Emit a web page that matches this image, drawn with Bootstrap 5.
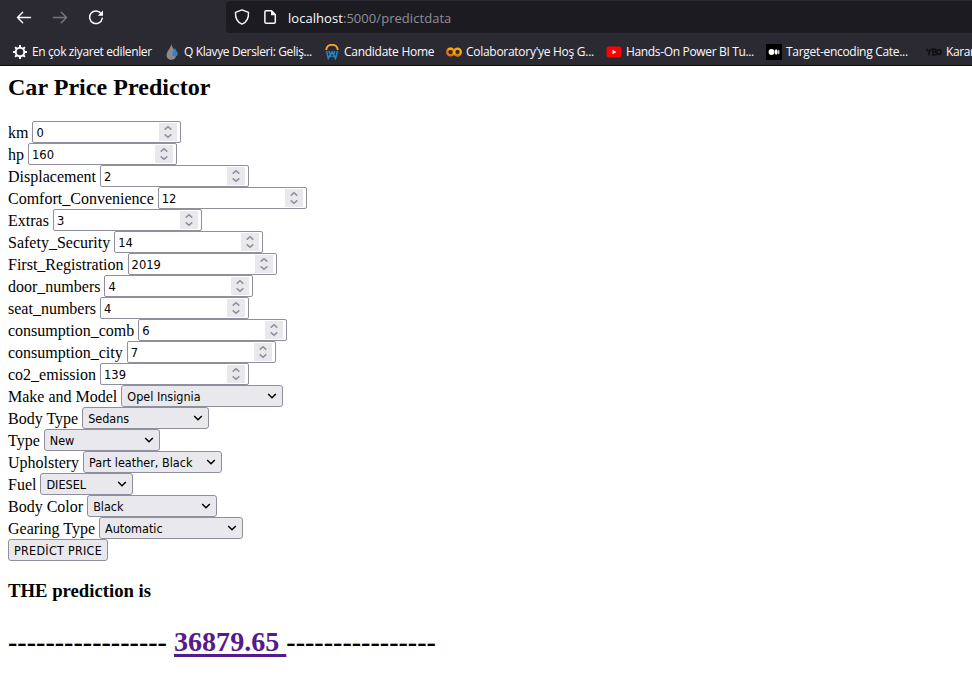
<!DOCTYPE html>
<html lang="tr">
<head>
<meta charset="utf-8">
<title>Car Price Predictor</title>
<link href="https://cdn.jsdelivr.net/npm/bootstrap@5.3.0/dist/css/bootstrap.min.css" rel="stylesheet">
<style>
body{font-family:"Liberation Serif",serif;font-size:16px;color:#000;line-height:22px;overflow:hidden}
.chrome{height:66px;background:#2b2a33;border-bottom:1px solid #0c0c0d;color:#fbfbfe;font-family:"Open Sans","Noto Sans",sans-serif;overflow:hidden}
.chrome svg{display:block;flex:none}
.topbar{height:34px;padding-left:16px}
.tools{gap:20px}
.address{height:32px;margin-left:122px;padding-left:8px;background:#1c1b22;border-radius:4px 0 0 4px;font-size:13px;letter-spacing:.05px}
.address svg+svg{margin-left:12px}
.address span.url{margin-left:10px;padding-top:1px}
.address .dim{color:#8f8f97}
.bookmarks{height:34px;padding-left:12px;padding-top:1px;font-size:12px;line-height:16px;letter-spacing:-.38px}
.bm{width:160px;gap:4px;flex:none;white-space:nowrap}
.bm span{padding-top:1px}
.bm-first{width:152px}.bm-short{width:122px;letter-spacing:-.27px}.bm-colab{letter-spacing:-.28px}.bm-video{letter-spacing:-.34px}.bm-target{letter-spacing:-.3px}
.page-body{padding:8px}
h1.title{font-size:24px;font-weight:700;line-height:27px;margin:0 0 20px;letter-spacing:.04px}
.field{height:22px;gap:4px;white-space:nowrap}
.field label{padding-top:1px}
.field input,.field select,.predict{font-family:"DejaVu Sans Condensed","DejaVu Sans",sans-serif;font-stretch:condensed;font-size:12.5px;height:22px;color:#000;border:1px solid #8f8f9d;margin:0;outline:0;letter-spacing:0}
.field input{width:149px;border-radius:2px;font-size:12.8px;padding:2px 3px 0;background:#fff url("data:image/svg+xml,%3Csvg xmlns='http://www.w3.org/2000/svg' width='18' height='18'%3E%3Cpath fill='%23e9e9ed' d='M0 0h18v18H0z'/%3E%3Cpath d='M5.7 6.6 9 3.7l3.3 2.9M5.7 11.4 9 14.3l3.3-2.9' fill='none' stroke='%238f8f9d' stroke-width='1.6'/%3E%3C/svg%3E") no-repeat right 3px center;appearance:textfield;-moz-appearance:textfield}
.field input::-webkit-inner-spin-button{appearance:none;-webkit-appearance:none;margin:0}
.field select{border-radius:3px;padding:0 20px 0 5px;appearance:none;background:#e9e9ed url("data:image/svg+xml,%3Csvg xmlns='http://www.w3.org/2000/svg' width='10' height='8'%3E%3Cpath d='M1.2 2 5 5.8 8.8 2' fill='none' stroke='%23000' stroke-width='1.5'/%3E%3C/svg%3E") no-repeat right 5px center}
.predict{display:block;width:100px;padding:1px 0 0;background:#e9e9ed;border-radius:3px;white-space:nowrap;font-size:12.4px;letter-spacing:.3px;line-height:20px}
.w-model{width:162px}.w-body{width:127px}.w-type{width:116px}.w-uph{width:139px}.w-fuel{width:93px}.w-color{width:130px}.w-gear{width:144px}
.result{font-size:18.72px;font-weight:700;line-height:22px;margin:19px 0 0}
.price{font-size:28.08px;font-weight:700;line-height:32px;margin:24px 0 0;white-space:pre}
.price a{color:#551a8b;text-decoration:underline;text-decoration-thickness:3px;text-underline-offset:3px;text-decoration-skip-ink:none}
</style>
</head>
<body>
<header class="chrome">
  <div class="topbar d-flex align-items-center">
    <div class="tools d-flex align-items-center">
      <svg width="16" height="16" viewBox="0 0 16 16" fill="none" stroke="#fbfbfe" stroke-width="1.4" stroke-linecap="round" stroke-linejoin="round"><path d="M14.5 8.5H1.5M6.7 3.2 1.5 8.5l5.2 5.3"/></svg>
      <svg width="16" height="16" viewBox="0 0 16 16" fill="none" stroke="#77767e" stroke-width="1.4" stroke-linecap="round" stroke-linejoin="round"><path d="M1.5 8.5h13M9.3 3.2l5.2 5.3-5.2 5.3"/></svg>
      <svg width="16" height="16" viewBox="0 0 16 16"><path d="M13.3 4.9A6.3 6.3 0 1 0 14.2 9.3" fill="none" stroke="#fbfbfe" stroke-width="1.5" stroke-linecap="round"/><path d="M15 1.6v5.2H9.8z" fill="#fbfbfe"/></svg>
    </div>
    <div class="address d-flex align-items-center flex-grow-1">
      <svg width="16" height="16" viewBox="0 0 16 16" fill="none" stroke="#fbfbfe" stroke-width="1.4" stroke-linejoin="round"><path d="M8 .9 14.5 3.3C14.8 9 12.5 13.4 8 15.2 3.5 13.4 1.2 9 1.5 3.3z"/></svg>
      <svg width="16" height="16" viewBox="0 0 16 16"><path d="M4.2 1.7H9.5L13.3 5.5V13a1.3 1.3 0 0 1-1.3 1.3H4.2A1.3 1.3 0 0 1 2.9 13V3a1.3 1.3 0 0 1 1.3-1.3z" fill="none" stroke="#fbfbfe" stroke-width="1.5"/><path d="M9 1.5v4.7h4.7z" fill="#fbfbfe"/></svg>
      <span class="url">localhost<span class="dim">:5000/predictdata</span></span>
    </div>
  </div>
  <nav class="bookmarks d-flex align-items-center">
    <div class="bm bm-first d-flex align-items-center">
      <svg width="16" height="16" viewBox="0 0 16 16" fill="none" stroke="#fbfbfe"><circle cx="8" cy="8" r="4.3" stroke-width="2"/><path stroke-width="2" d="M8 1v2.5M8 12.5V15M1 8h2.5M12.5 8H15M3.1 3.1l1.6 1.6M11.3 11.3l1.6 1.6M3.1 12.9l1.6-1.6M11.3 4.7l1.6-1.6"/></svg>
      <span>En çok ziyaret edilenler</span>
    </div>
    <div class="bm d-flex align-items-center">
      <svg width="16" height="16" viewBox="0 0 16 16"><path d="M7.3 0C7 4 2.6 7 2.6 11.2c0 6 9.4 6 9.4 0C12 7 8 4 7.3 0z" fill="#8b8b8a"/><path d="M10.8 3.5c-.2 2.5-2.6 4-2.6 6.2 0 3.7 5.6 3.7 5.6 0 0-2.2-2.7-3.7-3-6.2z" fill="#3c7fc0"/></svg>
      <span>Q Klavye Dersleri: Geliş...</span>
    </div>
    <div class="bm bm-short d-flex align-items-center">
      <svg width="16" height="16" viewBox="0 0 16 16" fill="none"><path d="M2.2 6C2.6-.9 13.4-.9 13.8 6" stroke="#f6a32c" stroke-width="2"/><path d="M2.5 7l1.8 7.4L8 8l3.5 6.4L13.5 7M5 7l2.2 6M10.7 7 9 13" stroke="#2383bd" stroke-width="1.6"/></svg>
      <span>Candidate Home</span>
    </div>
    <div class="bm bm-colab d-flex align-items-center">
      <svg width="16" height="16" viewBox="0 0 16 16" fill="none" stroke-width="2.3"><circle cx="4.5" cy="8" r="3.3" stroke="#e8710a"/><circle cx="11.5" cy="8" r="3.3" stroke="#f9ab00"/><path d="M2.1 5.7a3.3 3.3 0 0 1 4.7 0" stroke="#f9ab00"/><path d="M9.2 10.3a3.3 3.3 0 0 0 4.7 0" stroke="#e8710a"/></svg>
      <span>Colaboratory'ye Hoş G...</span>
    </div>
    <div class="bm bm-video d-flex align-items-center">
      <svg width="16" height="16" viewBox="0 0 16 16"><rect x=".5" y="2.5" width="15" height="11" rx="2.7" fill="red"/><path d="M6.5 5.8v4.4L10.4 8z" fill="#fff"/></svg>
      <span>Hands-On Power BI Tu...</span>
    </div>
    <div class="bm bm-target d-flex align-items-center">
      <svg width="16" height="16" viewBox="0 0 16 16"><path d="M0 0h16v16H0z"/><circle cx="5.5" cy="8" r="2.9" fill="#fff"/><ellipse cx="10.2" cy="8" rx="1.5" ry="2.8" fill="#fff"/><ellipse cx="12.8" cy="8" rx=".6" ry="2.5" fill="#fff"/></svg>
      <span>Target-encoding Cate...</span>
    </div>
    <div class="bm d-flex align-items-center">
      <svg width="16" height="16" viewBox="0 0 16 16" fill="none" stroke="#111114" stroke-width="1.7"><path d="M.5 5 3 8.2 5.3 5M3 8v3.2M6.8 5v6h2c2.2 0 2.2-3 0-3h-2 1.8c2 0 2-2.8 0-2.8z"/><circle cx="13" cy="8.1" r="2.3"/></svg>
      <span>Karar</span>
    </div>
  </nav>
</header>
<main class="page-body">
  <h1 class="title">Car Price Predictor</h1>
  <form>
    <div class="field d-flex"><label for="km">km</label><input id="km" type="number" value="0"></div>
    <div class="field d-flex"><label for="hp">hp</label><input id="hp" type="number" value="160"></div>
    <div class="field d-flex"><label for="disp">Displacement</label><input id="disp" type="number" value="2"></div>
    <div class="field d-flex"><label for="comfort">Comfort_Convenience</label><input id="comfort" type="number" value="12"></div>
    <div class="field d-flex"><label for="extras">Extras</label><input id="extras" type="number" value="3"></div>
    <div class="field d-flex"><label for="safety">Safety_Security</label><input id="safety" type="number" value="14"></div>
    <div class="field d-flex"><label for="reg">First_Registration</label><input id="reg" type="number" value="2019"></div>
    <div class="field d-flex"><label for="doors">door_numbers</label><input id="doors" type="number" value="4"></div>
    <div class="field d-flex"><label for="seats">seat_numbers</label><input id="seats" type="number" value="4"></div>
    <div class="field d-flex"><label for="comb">consumption_comb</label><input id="comb" type="number" value="6"></div>
    <div class="field d-flex"><label for="city">consumption_city</label><input id="city" type="number" value="7"></div>
    <div class="field d-flex"><label for="co2">co2_emission</label><input id="co2" type="number" value="139"></div>
    <div class="field d-flex"><label for="model">Make and Model</label><select id="model" class="w-model"><option>Opel Insignia</option></select></div>
    <div class="field d-flex"><label for="body">Body Type</label><select id="body" class="w-body"><option>Sedans</option></select></div>
    <div class="field d-flex"><label for="type">Type</label><select id="type" class="w-type"><option>New</option></select></div>
    <div class="field d-flex"><label for="uph">Upholstery</label><select id="uph" class="w-uph"><option>Part leather, Black</option></select></div>
    <div class="field d-flex"><label for="fuel">Fuel</label><select id="fuel" class="w-fuel"><option>DIESEL</option></select></div>
    <div class="field d-flex"><label for="color">Body Color</label><select id="color" class="w-color"><option>Black</option></select></div>
    <div class="field d-flex"><label for="gear">Gearing Type</label><select id="gear" class="w-gear"><option>Automatic</option></select></div>
    <button type="button" class="predict">PREDİCT PRICE</button>
  </form>
  <h3 class="result">THE prediction is</h3>
  <div class="price">----------------- <a href="#">36879.65 </a>----------------</div>
</main>
<script src="https://cdn.jsdelivr.net/npm/bootstrap@5.3.0/dist/js/bootstrap.bundle.min.js"></script>
</body>
</html>
